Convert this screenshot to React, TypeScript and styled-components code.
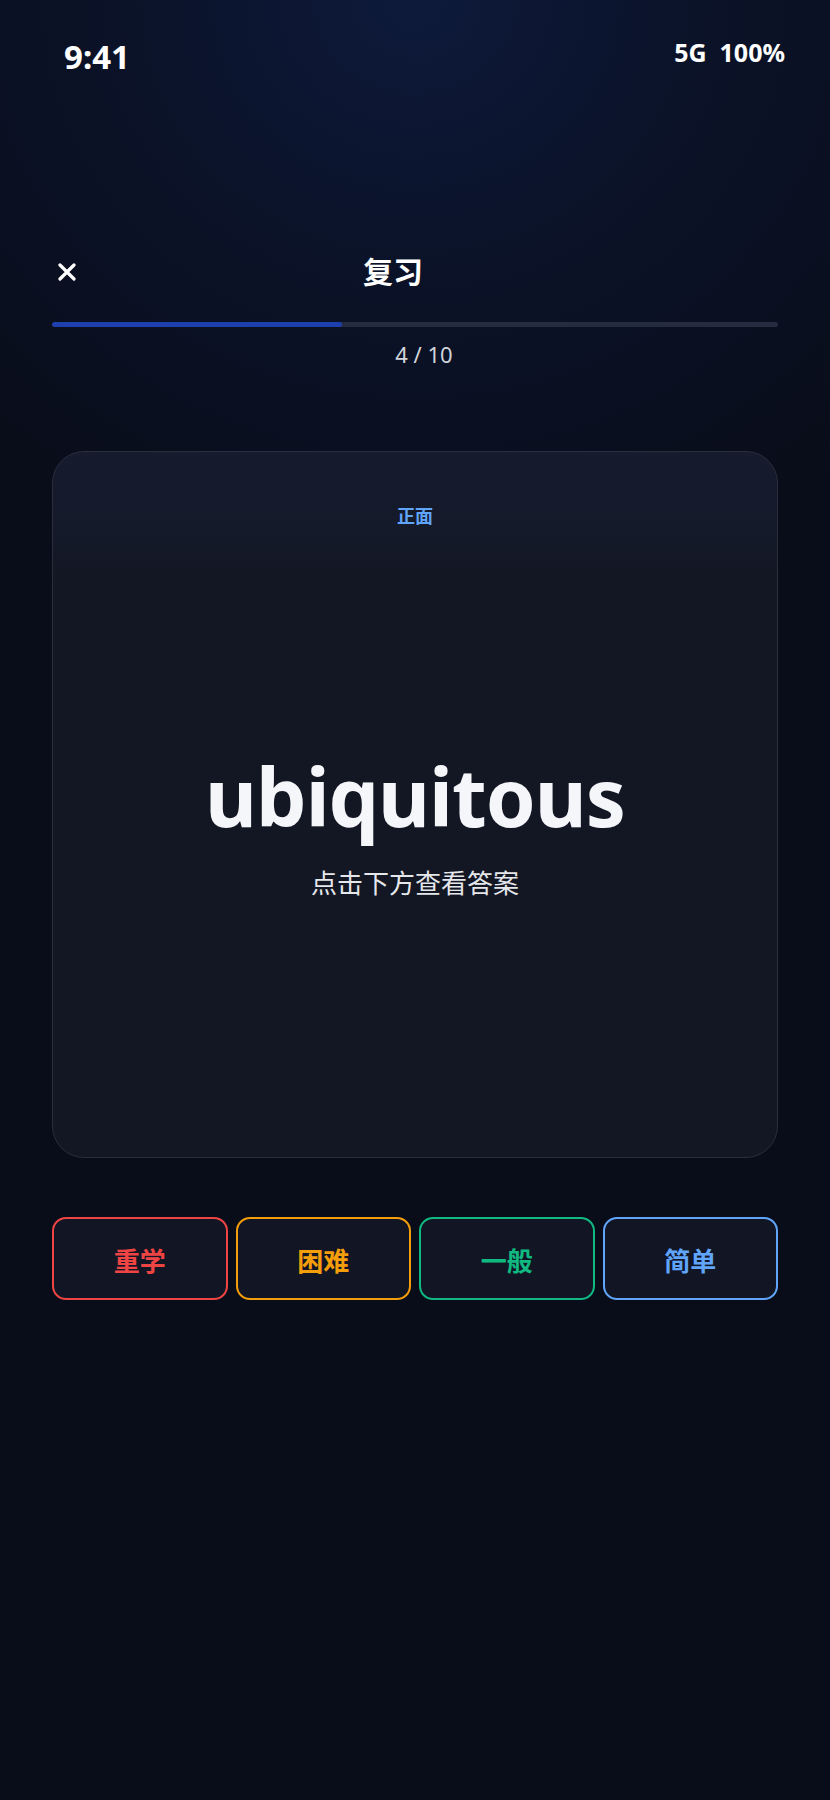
import React from 'react';
import styled, { createGlobalStyle } from 'styled-components';

const GlobalStyle = createGlobalStyle`
    * {
        box-sizing: border-box;
    }
    body {
        margin: 0;
        background: #090d19;
        font-family: 'Noto Sans', 'Noto Sans CJK SC', sans-serif;
        color: #f5f6fa;
    }
`;

const Page = styled.div`
    min-height: 1800px;
    background:
        radial-gradient(ellipse 80% 34% at 50% 0%, #0e1a3b 0%, rgba(12, 22, 50, 0.6) 45%, rgba(9, 13, 25, 0) 100%),
        #090d19;
`;

const StatusBar = styled.div`
    display: flex;
    justify-content: space-between;
    align-items: flex-start;
    height: 248px;
    padding: 40px 45px 0 64px;
`;

const Clock = styled.span`
    font-size: 33px;
    font-weight: 700;
    line-height: 1;
    color: #ffffff;
`;

const StatusIcons = styled.div`
    display: flex;
    gap: 13px;
    font-size: 25px;
    font-weight: 700;
    line-height: 1;
    color: #ffffff;
`;

const Main = styled.main`
    padding: 0 52px;
`;

const Header = styled.header`
    display: grid;
    grid-template-columns: 30px 1fr 74px;
    align-items: center;
    height: 48px;
`;

const CloseButton = styled.button`
    display: flex;
    align-items: center;
    justify-content: center;
    width: 30px;
    height: 30px;
    padding: 0;
    border: none;
    background: transparent;
    cursor: pointer;
`;

const Title = styled.h1`
    margin: 0;
    text-align: center;
    font-size: 30px;
    font-weight: 700;
    line-height: 48px;
    color: #ffffff;
`;

const ProgressTrack = styled.div`
    margin-top: 26px;
    height: 5px;
    border-radius: 3px;
    background: #262c3f;
    overflow: hidden;
`;

const ProgressFill = styled.div`
    height: 100%;
    border-radius: 3px;
    background: #1e40af;
`;

const Counter = styled.div`
    margin-top: 16px;
    padding-left: 18px;
    text-align: center;
    font-size: 22px;
    line-height: 1;
    color: #d1d5db;
`;

const Card = styled.section`
    display: flex;
    flex-direction: column;
    align-items: center;
    height: 707px;
    margin-top: 86px;
    padding: 55px 24px 30px;
    border: 1.5px solid #292e3d;
    border-radius: 32px;
    background: linear-gradient(180deg, #161b2d 0%, #141a2a 10%, #131724 18%, #131724 100%);
`;

const SideLabel = styled.div`
    font-size: 18px;
    font-weight: 700;
    line-height: 1;
    color: #60a5fa;
`;

const CardBody = styled.div`
    flex: 1;
    display: flex;
    flex-direction: column;
    align-items: center;
    justify-content: center;
`;

const Word = styled.div`
    font-size: 80px;
    font-weight: 700;
    letter-spacing: -1px;
    line-height: 1;
    color: #f5f6fa;
`;

const Hint = styled.div`
    margin-top: 34px;
    font-size: 26px;
    line-height: 1;
    color: #e5e7eb;
`;

const Ratings = styled.div`
    display: grid;
    grid-template-columns: repeat(4, 1fr);
    gap: 8px;
    margin-top: 59px;
`;

const RateButton = styled.button<{ tone: string }>`
    height: 83px;
    padding-top: 3px;
    border: 2px solid ${(props) => props.tone};
    border-radius: 14px;
    background: #121624;
    color: ${(props) => props.tone};
    font-family: 'Noto Sans', 'Noto Sans CJK SC', sans-serif;
    font-size: 26px;
    font-weight: 700;
    cursor: pointer;
`;

const ratings = [
    { label: '重学', tone: '#ef4444' },
    { label: '困难', tone: '#f59e0b' },
    { label: '一般', tone: '#10b981' },
    { label: '简单', tone: '#60a5fa' },
];

export default function App() {
    const current = 4;
    const total = 10;

    return (
        <Page>
            <GlobalStyle />
            <StatusBar>
                <Clock>9:41</Clock>
                <StatusIcons>
                    <span>5G</span>
                    <span>100%</span>
                </StatusIcons>
            </StatusBar>

            <Main>
                <Header>
                    <CloseButton aria-label='关闭'>
                        <svg width='18' height='18' viewBox='0 0 18 18'>
                            <path
                                d='M2 2 L16 16 M16 2 L2 16'
                                stroke='#ffffff'
                                strokeWidth='3.2'
                                strokeLinecap='round'
                            />
                        </svg>
                    </CloseButton>
                    <Title>复习</Title>
                    <span />
                </Header>

                <ProgressTrack>
                    <ProgressFill style={{ width: `${(current / total) * 100}%` }} />
                </ProgressTrack>
                <Counter>
                    {current} / {total}
                </Counter>

                <Card>
                    <SideLabel>正面</SideLabel>
                    <CardBody>
                        <Word>ubiquitous</Word>
                        <Hint>点击下方查看答案</Hint>
                    </CardBody>
                </Card>

                <Ratings>
                    {ratings.map((r) => (
                        <RateButton key={r.label} tone={r.tone}>
                            {r.label}
                        </RateButton>
                    ))}
                </Ratings>
            </Main>
        </Page>
    );
}
